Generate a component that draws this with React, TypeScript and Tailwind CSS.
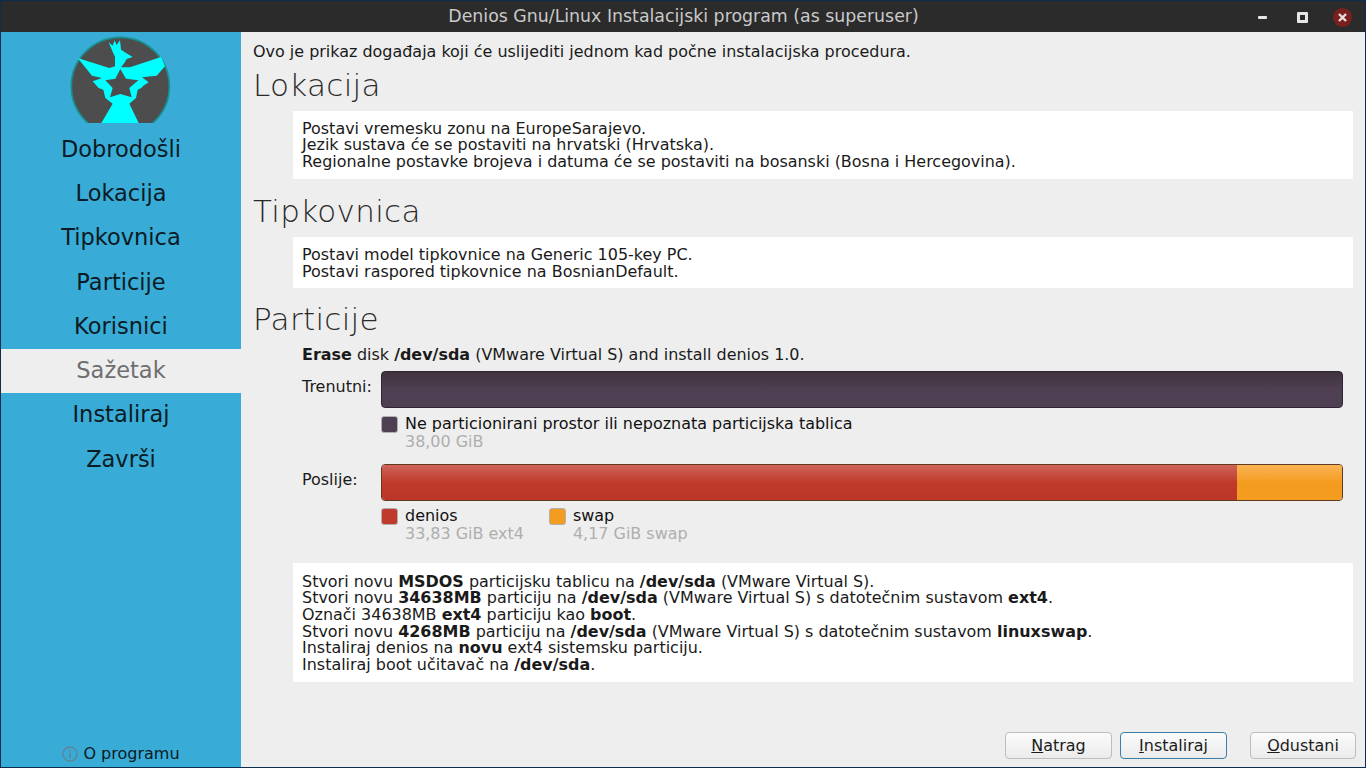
const F = { fontFamily: '"DejaVu Sans", sans-serif' };

function Logo() {
  return (
    <svg width="110" height="90" viewBox="0 0 330 270" className="block">
      <circle cx="163" cy="160" r="147" fill="#4d4d4d" stroke="#17908f" strokeWidth="5" />
      <path
        fill="#00ffff"
        d="M128 28 L140 38 L146 22 L152 36 L162 22 L165 50 L180 60 L200 72 L182 78 L175 90 L165 103 L192 103 L285 72 L297 100 L272 128 L228 133 L248 148 L232 158 L226 165 L215 170 L210 195 L190 212 L218 270 L106 270 L140 212 L118 195 L112 170 L98 165 L80 145 L108 135 L78 128 L35 75 L130 105 L147 100 L147 72 L138 52 Z"
      />
      <path
        fill="#4d4d4d"
        d="M163 108 L180 137 L217 142 L190 165 L197 193 L163 183 L132 193 L140 165 L118 142 L148 137 Z"
      />
    </svg>
  );
}

function Swatch({ color }: { color: string }) {
  return <div className="w-[17px] h-[17px] rounded-[3px] border border-[#b0b0b0] mt-[1px] shrink-0" style={{ background: color }} />;
}

function Legend({ color, name, size }: { color: string; name: string; size: string }) {
  return (
    <div className="flex gap-[7px]">
      <Swatch color={color} />
      <div className="leading-[18px]">
        <div className="text-[#111]">{name}</div>
        <div className="text-[#aeaeae]">{size}</div>
      </div>
    </div>
  );
}

function Btn({ k, rest, w, active }: { k: string; rest: string; w: string; active?: boolean }) {
  return (
    <div className={`${w} h-[27px] leading-[17px] rounded-[4px] border flex items-center justify-center bg-gradient-to-b from-[#fbfbfb] to-[#ebebeb] text-[#1b1b1b] ${active ? "border-[#3b7ea8]" : "border-[#bdbdbd]"}`}>
      <span><span className="underline">{k}</span>{rest}</span>
    </div>
  );
}

const NAV = ["Dobrodošli", "Lokacija", "Tipkovnica", "Particije", "Korisnici", "Sažetak", "Instaliraj", "Završi"];

export default function App() {
  return (
    <div className="w-[1366px] h-[768px] overflow-hidden bg-[#0c2d4e] p-[1px] flex flex-col text-[15.96px] leading-[17px] text-[#1a1a1a]" style={F}>
      <div className="h-[31px] shrink-0 bg-[#2b2b2b] flex items-center relative">
        <div className="flex-1 text-center text-[#c9c9c9] text-[17.36px] pl-[1px]">Denios Gnu/Linux Instalacijski program (as superuser)</div>
        <div className="absolute left-[1257px] top-[15px] w-[9px] h-[3px] bg-[#e6e6e6] rounded-[1px]" />
        <div className="absolute left-[1296px] top-[11px] w-[11px] h-[11px] border-[3px] border-[#e6e6e6] rounded-[1px]" />
        <div className="absolute left-[1332px] top-[7px] w-[19px] h-[19px] rounded-full bg-[#7a1f1f] flex items-center justify-center">
          <svg width="9" height="9" viewBox="0 0 9 9"><path d="M1 1 L8 8 M8 1 L1 8" stroke="#e8dcdc" strokeWidth="2.4" /></svg>
        </div>
      </div>
      <div className="flex-1 flex min-h-0">
        <div className="w-[240px] shrink-0 bg-[#38acd6] flex flex-col text-[22.5px] leading-[26px] text-[#0b1a24]">
          <div className="h-[95.5px] flex justify-center items-start pt-[1px] overflow-hidden">
            <Logo />
          </div>
          <div className="flex flex-col">
            {NAV.map((n) => (
              <div key={n} className={`h-[44.3px] pb-[2px] flex items-center justify-center ${n === "Sažetak" ? "bg-[#eeeeee] text-[#6e6e6e]" : ""}`}>{n}</div>
            ))}
          </div>
          <div className="mt-auto h-[29px] flex items-center justify-center gap-[5px] text-[16px] leading-[17px] text-[#0b1a24] pt-[2px]">
            <svg width="16" height="16" viewBox="0 0 16 16">
              <circle cx="8" cy="8" r="7" fill="none" stroke="#5f8598" strokeWidth="1.4" />
              <rect x="7.1" y="6.8" width="1.8" height="5.2" fill="#5f8598" />
              <rect x="7.1" y="3.8" width="1.8" height="1.8" fill="#5f8598" />
            </svg>
            <span>O programu</span>
          </div>
        </div>
        <div className="flex-1 bg-[#eeeeee] flex flex-col pl-[12px] pr-[12px] min-w-0">
          <div className="pt-[11px] h-[29px] whitespace-nowrap">Ovo je prikaz događaja koji će uslijediti jednom kad počne instalacijska procedura.</div>
          <h2 className="text-[31px] leading-[36px] font-extralight text-[#2a2a2a] mt-[6px] tracking-[0.3px]">Lokacija</h2>
          <div className="ml-[40px] mt-[8px] bg-white h-[68px] px-[9px] pt-[9.5px] leading-[16.7px]">
            <div>Postavi vremesku zonu na EuropeSarajevo.</div>
            <div>Jezik sustava će se postaviti na hrvatski (Hrvatska).</div>
            <div>Regionalne postavke brojeva i datuma će se postaviti na bosanski (Bosna i Hercegovina).</div>
          </div>
          <h2 className="text-[31px] leading-[36px] font-extralight text-[#2a2a2a] mt-[14px] tracking-[0.3px]">Tipkovnica</h2>
          <div className="ml-[40px] mt-[8px] bg-white h-[51px] px-[9px] pt-[9px]">
            <div>Postavi model tipkovnice na Generic 105-key PC.</div>
            <div>Postavi raspored tipkovnice na BosnianDefault.</div>
          </div>
          <h2 className="text-[31px] leading-[36px] font-extralight text-[#2a2a2a] mt-[13px] tracking-[0.3px]">Particije</h2>
          <div className="ml-[49px] mt-[9px] h-[17px]"><b>Erase</b> disk <b>/dev/sda</b> (VMware Virtual S) and install denios 1.0.</div>
          <div className="ml-[49px] mr-[10px] mt-[8px] flex">
            <div className="w-[79px] pt-[7px]">Trenutni:</div>
            <div className="flex-1 h-[37px] rounded-[4px] border border-[#2f2533] bg-gradient-to-b from-[#40333f] via-[#4f3f52] to-[#4f3f52]" />
          </div>
          <div className="ml-[128px] mt-[7px] h-[37px]">
            <Legend color="#4f3f52" name="Ne particionirani prostor ili nepoznata particijska tablica" size="38,00 GiB" />
          </div>
          <div className="ml-[49px] mr-[10px] mt-[12px] flex">
            <div className="w-[79px] pt-[7px]">Poslije:</div>
            <div className="flex-1 h-[37px] rounded-[4px] border border-[#5e3a20] overflow-hidden flex">
              <div className="w-[855px] bg-gradient-to-b from-[#cf6359] via-[#bf3a2b] to-[#bb3628]" />
              <div className="flex-1 bg-gradient-to-b from-[#f9b350] via-[#f39c1f] to-[#f39c1f]" />
            </div>
          </div>
          <div className="ml-[128px] mt-[6px] h-[37px] flex gap-[25px]">
            <Legend color="#bf3a2b" name="denios" size="33,83 GiB ext4" />
            <Legend color="#f39c1f" name="swap" size="4,17 GiB swap" />
          </div>
          <div className="ml-[40px] mt-[19px] bg-white h-[119px] px-[9px] pt-[10.5px] leading-[16.7px]">
            <div>Stvori novu <b>MSDOS</b> particijsku tablicu na <b>/dev/sda</b> (VMware Virtual S).</div>
            <div>Stvori novu <b>34638MB</b> particiju na <b>/dev/sda</b> (VMware Virtual S) s datotečnim sustavom <b>ext4</b>.</div>
            <div>Označi 34638MB <b>ext4</b> particiju kao <b>boot</b>.</div>
            <div>Stvori novu <b>4268MB</b> particiju na <b>/dev/sda</b> (VMware Virtual S) s datotečnim sustavom <b>linuxswap</b>.</div>
            <div>Instaliraj denios na <b>novu</b> ext4 sistemsku particiju.</div>
            <div>Instaliraj boot učitavač na <b>/dev/sda</b>.</div>
          </div>
          <div className="mt-auto mb-[8px] -mr-[3px] flex items-center justify-end">
            <Btn k="N" rest="atrag" w="w-[107px]" />
            <div className="w-[8px]" />
            <Btn k="I" rest="nstaliraj" w="w-[107px]" active />
            <div className="w-[23px]" />
            <Btn k="O" rest="dustani" w="w-[106px]" />
          </div>
        </div>
      </div>
    </div>
  );
}
